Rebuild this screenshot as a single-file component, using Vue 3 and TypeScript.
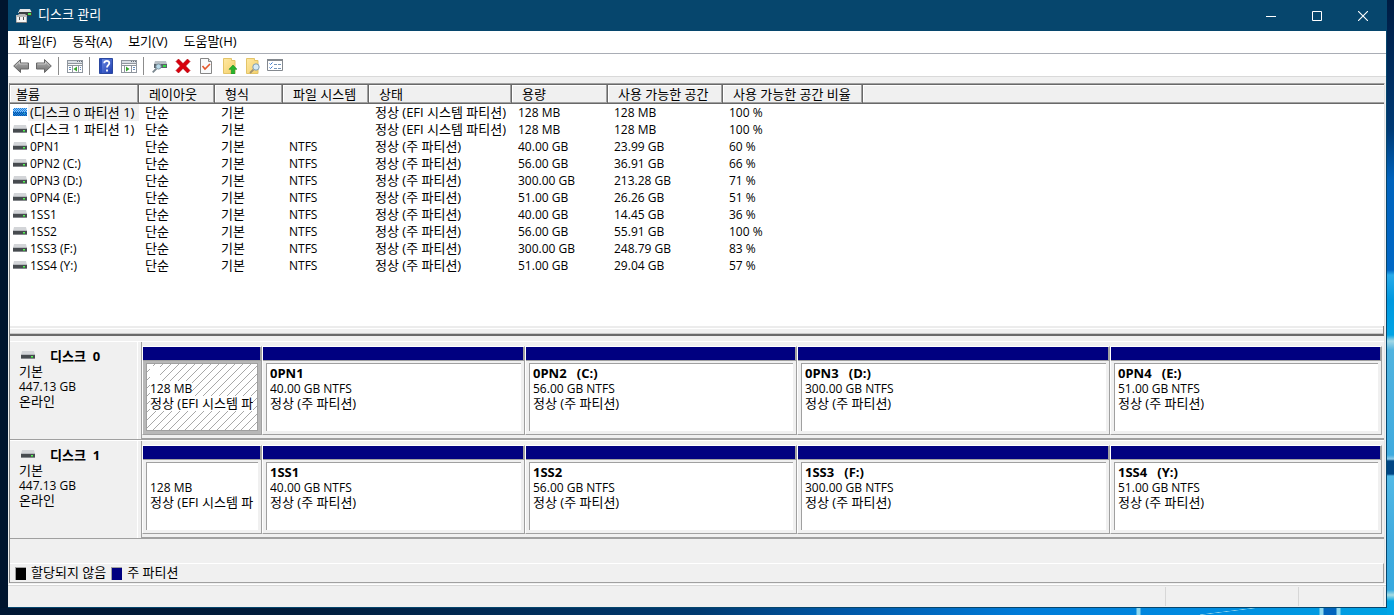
<script setup lang="ts">
interface Volume {
  name: string
  size: string
  status: string
  fs: string
  free: string
  percent: string
}

interface Partition {
  label: string
  size: string
  status: string
  selected?: boolean
}

interface Disk {
  name: string
  partitions: Partition[]
}

const primary = '정상 (주 파티션)'
const efi = '정상 (EFI 시스템 파티션)'

const menus = ['파일(F)', '동작(A)', '보기(V)', '도움말(H)']
const columns = ['볼륨', '레이아웃', '형식', '파일 시스템', '상태', '용량', '사용 가능한 공간', '사용 가능한 공간 비율', '']

const volumes: Volume[] = [
  { name: '(디스크 0 파티션 1)', fs: '', status: efi, size: '128 MB', free: '128 MB', percent: '100 %' },
  { name: '(디스크 1 파티션 1)', fs: '', status: efi, size: '128 MB', free: '128 MB', percent: '100 %' },
  { name: '0PN1', fs: 'NTFS', status: primary, size: '40.00 GB', free: '23.99 GB', percent: '60 %' },
  { name: '0PN2 (C:)', fs: 'NTFS', status: primary, size: '56.00 GB', free: '36.91 GB', percent: '66 %' },
  { name: '0PN3 (D:)', fs: 'NTFS', status: primary, size: '300.00 GB', free: '213.28 GB', percent: '71 %' },
  { name: '0PN4 (E:)', fs: 'NTFS', status: primary, size: '51.00 GB', free: '26.26 GB', percent: '51 %' },
  { name: '1SS1', fs: 'NTFS', status: primary, size: '40.00 GB', free: '14.45 GB', percent: '36 %' },
  { name: '1SS2', fs: 'NTFS', status: primary, size: '56.00 GB', free: '55.91 GB', percent: '100 %' },
  { name: '1SS3 (F:)', fs: 'NTFS', status: primary, size: '300.00 GB', free: '248.79 GB', percent: '83 %' },
  { name: '1SS4 (Y:)', fs: 'NTFS', status: primary, size: '51.00 GB', free: '29.04 GB', percent: '57 %' },
]

const efiPartition: Partition = { label: '\u00a0\u00a0\u00a0', size: '128 MB', status: efi }

const disks: Disk[] = [
  {
    name: '디스크\u00a0\u00a00',
    partitions: [
      { ...efiPartition, selected: true },
      { label: '0PN1', size: '40.00 GB NTFS', status: primary },
      { label: '0PN2\u00a0\u00a0\u00a0(C:)', size: '56.00 GB NTFS', status: primary },
      { label: '0PN3\u00a0\u00a0\u00a0(D:)', size: '300.00 GB NTFS', status: primary },
      { label: '0PN4\u00a0\u00a0\u00a0(E:)', size: '51.00 GB NTFS', status: primary },
    ],
  },
  {
    name: '디스크\u00a0\u00a01',
    partitions: [
      efiPartition,
      { label: '1SS1', size: '40.00 GB NTFS', status: primary },
      { label: '1SS2', size: '56.00 GB NTFS', status: primary },
      { label: '1SS3\u00a0\u00a0\u00a0(F:)', size: '300.00 GB NTFS', status: primary },
      { label: '1SS4\u00a0\u00a0\u00a0(Y:)', size: '51.00 GB NTFS', status: primary },
    ],
  },
]

const hasHangul = (text: string): boolean => /[가-힣]/.test(text)
</script>

<template>
  <div class="desktop">
    <svg class="defs" width="0" height="0" aria-hidden="true">
      <defs>
        <linearGradient id="arrowFill" x1="0" y1="0" x2="0" y2="1">
          <stop offset="0" stop-color="#b4b4b4" />
          <stop offset="1" stop-color="#707070" />
        </linearGradient>
        <linearGradient id="helpFill" x1="0" y1="0" x2="1" y2="1">
          <stop offset="0" stop-color="#6f8fe8" />
          <stop offset="1" stop-color="#1d3cae" />
        </linearGradient>
        <linearGradient id="folderFill" x1="0" y1="0" x2="1" y2="1">
          <stop offset="0" stop-color="#ffe9a3" />
          <stop offset="1" stop-color="#f3cf6a" />
        </linearGradient>
        <symbol id="drive" viewBox="0 0 14 8">
          <path d="M1 0h12l1 4H0z" fill="#d3d5d8" />
          <path d="M0 3h14v1H0z" fill="#b4b7bb" />
          <path d="M0 4h14v3H0z" fill="#474b4f" />
          <path d="M0 7h14v1H0z" fill="#85888c" />
          <path d="M10 5h2v1h-2z" fill="#5cf05c" />
          <path d="M10 6h2v1h-2z" fill="#3aa83e" />
        </symbol>
        <symbol id="driveSelected" viewBox="0 0 14 8">
          <path d="M1 0h12l1 4H0z" fill="#8fc2f2" />
          <path d="M0 4h14v4H0z" fill="#10569f" />
          <path d="M1 .5h13M0 1.500h13M1 2.500h13M0 3.500h13M1 4.500h13M0 5.500h13M1 6.500h13M0 7.500h13" stroke="#1683e6" stroke-dasharray="1 1" />
          <path d="M10 5h2v1h-2z" fill="#1fa3c4" />
        </symbol>
      </defs>
    </svg>

    <main class="window">
      <header class="titlebar">
        <svg class="app-icon" width="16" height="16" viewBox="0 0 16 16" aria-hidden="true">
          <path d="M4 1h10l2 4H2z" fill="#e4e5e6" />
          <path d="M3 4h13v4H3z" fill="#3b3f42" />
          <path d="M12 5h3v2h-3z" fill="#45e052" />
          <path d="M0 7h2l1-1h6l1 1h1v8H0z" fill="#b9b9b9" />
          <path d="M1 9h9v5H1z" fill="#f5f5f5" />
          <path d="M3 9h1v3H3zM7 9h1v3H7z" fill="#555" />
          <path d="M0 14h11v1H0z" fill="#77797b" />
        </svg>
        <h1>디스크 관리</h1>
        <div class="caption-buttons">
          <button type="button" aria-label="최소화">
            <svg width="10" height="10" viewBox="0 0 10 10"><path d="M0 5.500h10" stroke="#fff" /></svg>
          </button>
          <button type="button" aria-label="최대화">
            <svg width="10" height="10" viewBox="0 0 10 10"><path d="M.5.5h9v9h-9z" fill="none" stroke="#fff" /></svg>
          </button>
          <button type="button" aria-label="닫기">
            <svg width="10" height="10" viewBox="0 0 10 10"><path d="M0 0l10 10M10 0L0 10" stroke="#fff" stroke-width="1.100" /></svg>
          </button>
        </div>
      </header>

      <nav class="menubar">
        <button v-for="menu in menus" :key="menu" type="button">{{ menu }}</button>
      </nav>

      <div class="toolbar" role="toolbar">
        <button type="button" aria-label="뒤로">
          <svg width="16" height="16" viewBox="0 0 16 16"><path d="M.7 8L7.500 1.500V5h8v6h-8v3.500z" fill="url(#arrowFill)" stroke="#666" /><path d="M2.500 7.800L6.500 4v2h8" fill="none" stroke="#d0d0d0" stroke-width=".8" /></svg>
        </button>
        <button type="button" aria-label="앞으로">
          <svg width="16" height="16" viewBox="0 0 16 16"><path d="M15.300 8L8.500 1.500V5h-8v6h8v3.500z" fill="url(#arrowFill)" stroke="#666" /><path d="M1.500 6h8V4l4 3.800" fill="none" stroke="#d0d0d0" stroke-width=".8" /></svg>
        </button>
        <span class="divider"></span>
        <button type="button" aria-label="콘솔 트리 표시/숨기기">
          <svg width="16" height="16" viewBox="0 0 16 16">
            <path d="M0 2h16v13H0z" fill="#8f969e" /><path d="M1 3h14v2H1z" fill="#d8dde3" /><path d="M10 3h1v1h-1zM12 3h1v1h-1zM14 3h1v1h-1z" fill="#69727c" />
            <path d="M1 6h14v1H1z" fill="#f8f8f8" /><path d="M1 8h4v6H1zM6 8h5v6H6zM12 8h3v6h-3z" fill="#fff" />
            <path d="M2 9.500h2M2 11.500h2M13 9.500h1M13 11.500h1" stroke="#648cbe" /><path d="M10 8.500v5L6.500 11z" fill="#35a52c" />
          </svg>
        </button>
        <span class="divider"></span>
        <button type="button" aria-label="도움말">
          <svg width="14" height="16" viewBox="0 0 14 16">
            <path d="M.5.5h13v15H.5z" fill="url(#helpFill)" stroke="#2b489f" /><path d="M1 1h2v14H1z" fill="#2a4fbd" />
            <path d="M5.200 5.300C5.200 2 10.500 2.200 10.300 5.200 10.200 7 8 7.200 8 9.500M8 11.500v2" fill="none" stroke="#fff" stroke-width="1.800" />
          </svg>
        </button>
        <button type="button" aria-label="작업 창 표시/숨기기">
          <svg width="16" height="16" viewBox="0 0 16 16">
            <path d="M0 2h16v13H0z" fill="#8f969e" /><path d="M1 3h14v2H1z" fill="#d8dde3" /><path d="M10 3h1v1h-1zM12 3h1v1h-1zM14 3h1v1h-1z" fill="#69727c" />
            <path d="M1 6h14v1H1z" fill="#f8f8f8" /><path d="M1 8h2v6H1zM4 8h6v6H4zM11 8h4v6h-4z" fill="#fff" />
            <path d="M12 9.500h2M12 11.500h2" stroke="#648cbe" /><path d="M5 8.500v5L8.500 11z" fill="#35a52c" />
          </svg>
        </button>
        <span class="divider"></span>
        <button type="button" aria-label="새로 고침">
          <svg width="16" height="16" viewBox="0 0 16 16">
            <path d="M3 3h11l1 3H2z" fill="#b9c0c6" /><path d="M2 6h13v4H2z" fill="#59636b" /><path d="M11 7h3v2h-3z" fill="#35dd45" />
            <path d="M4.500 10.500L.7 14.300" stroke="#7a878f" stroke-width="1.800" /><circle cx="6.500" cy="8.500" r="2.600" fill="#b7d9e9" stroke="#8298a5" />
          </svg>
        </button>
        <button type="button" aria-label="삭제">
          <svg width="16" height="16" viewBox="0 0 16 16"><path d="M3.500 1L8 5.600 12.500 1 15 3.500 10.700 8 15 12.500 12.500 15 8 10.400 3.500 15 1 12.500 5.300 8 1 3.500z" fill="#d9000d" stroke="#a90009" stroke-width=".6" /></svg>
        </button>
        <button type="button" aria-label="속성">
          <svg width="14" height="16" viewBox="0 0 14 16">
            <path d="M1.500.5h8l3 3v12h-11z" fill="#f9fafb" stroke="#868686" /><path d="M9.500.5v3h3" fill="#ddd" stroke="#868686" />
            <path d="M3.500 8l2.500 3 5-5" fill="none" stroke="#e5582b" stroke-width="1.600" />
          </svg>
        </button>
        <button type="button" aria-label="열기">
          <svg width="16" height="16" viewBox="0 0 16 16">
            <path d="M2.500.5h8v2h3.500v13H2.500z" fill="url(#folderFill)" stroke="#e3c468" /><path d="M12 7l4 4.300h-2.300V16h-3.400v-4.700H8z" fill="#27b52d" stroke="#138b20" stroke-width=".6" />
          </svg>
        </button>
        <button type="button" aria-label="탐색">
          <svg width="16" height="16" viewBox="0 0 16 16">
            <path d="M2.500.5h8v2h3.500v13H2.500z" fill="url(#folderFill)" stroke="#e3c468" /><path d="M9.500 11.500L6 15" stroke="#a3936d" stroke-width="1.800" /><circle cx="12" cy="9" r="3.200" fill="#d6eaf5" stroke="#7c9cb5" />
          </svg>
        </button>
        <button type="button" aria-label="설정">
          <svg width="16" height="16" viewBox="0 0 16 16">
            <path d="M.5 1.500h15v11H.5z" fill="#fff" stroke="#84898f" /><path d="M0 1h16v2H0z" fill="#84898f" />
            <path d="M2.500 5.500l1 1L5.500 4.500M2.500 9.500l1 1 2-2" fill="none" stroke="#3677d0" /><path d="M7 6.500h3M11 6.500h3M7 10.500h3M11 10.500h3" stroke="#7595b8" />
          </svg>
        </button>
      </div>

      <div class="content">
        <section class="volume-list">
          <table>
            <colgroup>
              <col v-for="n in 9" :key="n" :class="'col-' + n" />
            </colgroup>
            <thead>
              <tr>
                <th v-for="(column, i) in columns" :key="i" scope="col">{{ column }}</th>
              </tr>
            </thead>
            <tbody>
              <tr v-for="(volume, i) in volumes" :key="volume.name" :class="{ selected: i === 0 }">
                <td>
                  <div class="volume-name">
                    <svg width="14" height="8" aria-hidden="true"><use :href="i === 0 ? '#driveSelected' : '#drive'" /></svg>
                    <span :class="{ hangul: hasHangul(volume.name) }">{{ volume.name }}</span>
                  </div>
                </td>
                <td class="hangul">단순</td>
                <td class="hangul">기본</td>
                <td>{{ volume.fs }}</td>
                <td class="hangul">{{ volume.status }}</td>
                <td>{{ volume.size }}</td>
                <td>{{ volume.free }}</td>
                <td>{{ volume.percent }}</td>
                <td></td>
              </tr>
            </tbody>
          </table>
        </section>

        <section class="disk-view">
          <article v-for="disk in disks" :key="disk.name" class="disk">
            <div class="disk-label">
              <h2>
                <svg width="14" height="8" aria-hidden="true"><use href="#drive" /></svg>
                <span>{{ disk.name }}</span>
              </h2>
              <p class="hangul">기본</p>
              <p>447.13 GB</p>
              <p class="hangul">온라인</p>
            </div>
            <div class="partitions">
              <div v-for="(part, i) in disk.partitions" :key="i" class="partition" :class="{ selected: part.selected }">
                <div class="stripe"></div>
                <div class="frame">
                  <div class="info">
                    <p><strong>{{ part.label }}</strong></p>
                    <p><span>{{ part.size }}</span></p>
                    <p class="hangul"><span>{{ part.status }}</span></p>
                  </div>
                </div>
              </div>
            </div>
          </article>
          <footer class="legend">
            <span class="swatch unallocated"></span><span>할당되지 않음</span>
            <span class="swatch primary"></span><span>주 파티션</span>
          </footer>
        </section>
      </div>

      <div class="statusbar"><span></span><span></span><span></span></div>
    </main>
  </div>
</template>

<style>
body {
  margin: 0;
}
</style>

<style scoped>
* {
  box-sizing: border-box;
}

.desktop {
  min-height: 100vh;
  padding: 0 7px 7px 8px;
  display: flex;
  background:
    linear-gradient(180deg, #001c42 0, #003a75 130px, #0063bd 180px, #0067c5 270px, #29aae9 275px, #0098df 300px, #00a4e5 335px, #a4d8e5 341px, #50b3df 350px, #3faade 455px, #8bcceb 459px, #004684 461px, #004684 474px, #52b9e6 476px, #3faade 540px, #35a9df 590px, #a8dce2 595px, #00a5e5 601px) right top / 7px 100% no-repeat,
    linear-gradient(90deg, transparent 1136px, #8fd8ed 1137px, #8fd8ed 1140px, transparent 1141px, transparent 1319px, #8fd8ed 1320px, #8fd8ed 1323px, #0064bd 1324px, #0064bd 1336px, #8fd8ed 1337px, #8fd8ed 1340px, transparent 1341px) left bottom / 100% 7px no-repeat,
    linear-gradient(173deg, transparent 48%, #8fd3ea 50%, transparent 52%) 1200px 100% / 110px 14px no-repeat,
    linear-gradient(90deg, #001733 0, #001c3b 300px, #003a70 700px, #0058a8 850px, #007bd8 1020px, #008be0 1200px, #00a3e3 1394px) left bottom / 100% 7px no-repeat,
    #00152f;
  color: #000;
  font: 12px/17px "Open Sans", "Noto Sans CJK KR", sans-serif;
}

.defs {
  position: absolute;
}

.window {
  flex: 1;
  min-width: 0;
  display: flex;
  flex-direction: column;
  background: #f0f0f0;
  border-right: 1px solid #06466d;
  border-bottom: 1px solid #06466d;
}

.hangul {
  font-size: 13px;
}

button {
  margin: 0;
  padding: 0;
  border: 0;
  background: none;
  font: inherit;
  color: inherit;
  display: flex;
  align-items: center;
  justify-content: center;
}

.titlebar {
  height: 31px;
  display: flex;
  align-items: center;
  padding-left: 8px;
  gap: 6px;
  background: #06466d;
  color: #fff;
}

h1 {
  margin: 0;
  padding-bottom: 2px;
  flex: 1;
  font-size: 13px;
  font-weight: 400;
}

.caption-buttons {
  display: flex;
}

.caption-buttons button {
  width: 46px;
  height: 30px;
}

.menubar {
  height: 23px;
  display: flex;
  padding-left: 2px;
  background: #fff;
  border-bottom: 1px solid #a9adb5;
  font-size: 13px;
}

.menubar button {
  padding: 0 8px 2px;
}

.toolbar {
  height: 23px;
  display: flex;
  align-items: flex-end;
  padding-left: 1px;
  background: #fff;
  border-bottom: 1px solid #d9d9d9;
}

.toolbar button {
  width: 23px;
  height: 20px;
}

.divider {
  width: 1px;
  height: 18px;
  margin: 0 4px 1px 3px;
  background: #8c8c8c;
}

.content {
  flex: 1;
  display: flex;
  flex-direction: column;
  padding: 6px 1px 1px;
  border-bottom: 1px solid #fff;
}

.volume-list {
  flex: 1;
  background: #fff;
  border-top: 1px solid #a0a0a0;
  border-left: 1px solid #808080;
  border-right: 1px solid #e3e3e3;
  display: flex;
  flex-direction: column;
}

.volume-list::after {
  content: "";
  margin-top: auto;
  height: 8px;
  background: #f0f0f0;
  border-bottom: 2px solid #696969;
  border-right: 1px solid #808080;
  box-shadow: inset 0 2px #ececec, inset 0 3px #fff, inset 0 -1px #c8c8c8;
}

table {
  width: 100%;
  table-layout: fixed;
  border-collapse: separate;
  border-spacing: 0;
  border-top: 1px solid #696969;
}

.col-1 { width: 129px; }
.col-2 { width: 76px; }
.col-3 { width: 68px; }
.col-4 { width: 86px; }
.col-5 { width: 143px; }
.col-6 { width: 96px; }
.col-7 { width: 115px; }
.col-8 { width: 140px; }

th {
  height: 19px;
  padding: 0 0 0 10px;
  background: #f0f0f0;
  border-right: 1px solid #696969;
  border-bottom: 1px solid #696969;
  box-shadow: inset -1px -1px #a0a0a0, inset 1px 1px #fff;
  font-size: 13px;
  font-weight: 400;
  line-height: 17px;
  text-align: left;
  white-space: nowrap;
}

th:first-child {
  padding-left: 6px;
}

th:last-child {
  border-right: 0;
  box-shadow: inset 0 -1px #a0a0a0, inset 1px 1px #fff;
}

td {
  height: 17px;
  padding: 0 0 0 6px;
  line-height: 17px;
  white-space: nowrap;
}

td:first-child {
  padding-left: 3px;
}

.volume-name {
  display: flex;
  align-items: center;
  gap: 1px;
  height: 17px;
}

.volume-name svg {
  margin-bottom: 1px;
}

.volume-name span {
  flex: 1;
  padding-left: 2px;
}

tr.selected .volume-name span {
  background: #f0f0f0;
}

.disk-view {
  padding-top: 5px;
  border-left: 1px solid #808080;
  border-right: 1px solid #e3e3e3;
}

.disk {
  height: 99px;
  display: flex;
  border-top: 1px solid #fff;
  border-bottom: 1px solid #a0a0a0;
}

.disk-label {
  width: 132px;
  padding: 7px 0 0 9px;
  border-right: 1px solid #a0a0a0;
  box-shadow: inset -3px 0 #f0f0f0, inset -4px 0 #fff;
  line-height: 15px;
}

.disk p,
.disk h2 {
  margin: 0;
  height: 15px;
  line-height: 15px;
}

.disk h2 {
  display: flex;
  align-items: center;
  gap: 15px;
  padding-left: 2px;
  font-size: 13px;
}

.disk h2 svg {
  margin-bottom: 4px;
}

.partitions {
  flex: 1;
  min-width: 0;
  display: grid;
  grid-template-columns: 120fr 263fr 272fr 313fr 272fr;
  padding: 4px 2px 3px 0;
  border-bottom: 1px solid #a0a0a0;
}

.partition {
  min-width: 0;
  display: flex;
  flex-direction: column;
  border-top: 1px solid #fff;
  border-left: 1px solid #fff;
  border-right: 1px solid #a0a0a0;
  border-bottom: 1px solid #a0a0a0;
}

.stripe {
  height: 14px;
  background: #000080;
  border-right: 1px solid #a0a0a0;
  border-bottom: 1px solid #a0a0a0;
}

.frame {
  flex: 1;
  display: flex;
  padding: 2px 3px 3px;
}

.info {
  flex: 1;
  min-width: 0;
  padding: 2px 4px 0 3px;
  background: #fff;
  border-top: 1px solid #a0a0a0;
  border-left: 1px solid #a0a0a0;
}

.info p {
  overflow-x: clip;
  white-space: nowrap;
}

.info strong {
  font-size: 13px;
}

.selected .frame {
  background: #b8b8b8;
}

.selected .info {
  border: 1px solid #a0a0a0;
  background: linear-gradient(135deg, #fff 44%, #a8a8a8 48%, #a8a8a8 52%, #fff 56%) 0 0 / 8px 8px;
}

.selected .info strong,
.selected .info span {
  display: inline-block;
  background: #fff;
}

.legend {
  height: 20px;
  margin-top: 24px;
  padding-left: 5px;
  display: flex;
  align-items: center;
  gap: 5px;
  border-top: 1px solid #fff;
  border-right: 1px solid #a0a0a0;
  border-bottom: 1px solid #a0a0a0;
  font-size: 13px;
}

.legend span:not(.swatch) {
  padding-bottom: 2px;
}

.swatch {
  width: 11px;
  height: 13px;
  border-top: 1px solid #a0a0a0;
  border-left: 1px solid #a0a0a0;
}

.unallocated {
  background: #000;
}

.primary {
  background: #000080;
}

.statusbar {
  height: 22px;
  display: flex;
  padding: 1px 2px 1px 0;
  border-top: 1px solid #d7d7d7;
}

.statusbar span {
  width: 133px;
  border-right: 1px solid #d7d7d7;
}

.statusbar span:first-child {
  flex: 1;
}

.statusbar span:last-child {
  width: 85px;
}
</style>
